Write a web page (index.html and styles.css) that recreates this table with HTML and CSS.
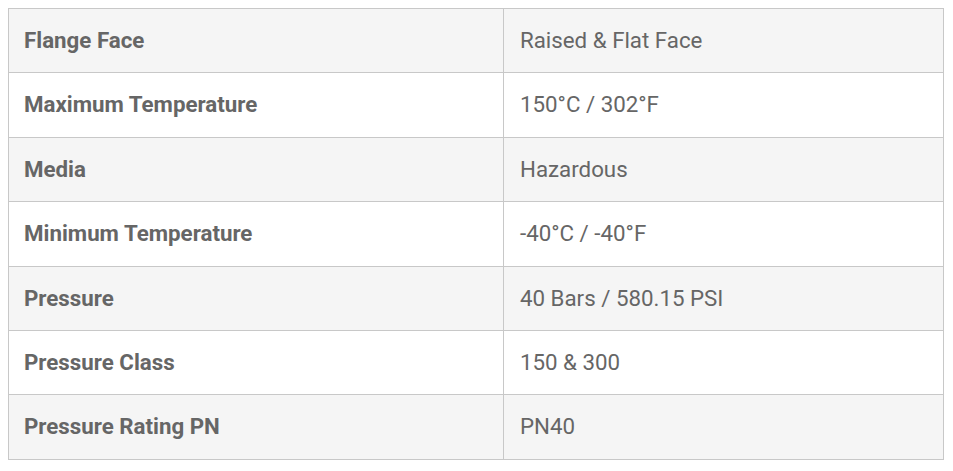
FILE: index.html
```html
<!DOCTYPE html>
<html>
<head>
<meta charset="utf-8">
<link rel="stylesheet" href="styles.css">
</head>
<body>
<table class="specs">
  <tbody>
    <tr><th>Flange Face</th><td>Raised &amp; Flat Face</td></tr>
    <tr><th>Maximum Temperature</th><td>150°C / 302°F</td></tr>
    <tr><th>Media</th><td>Hazardous</td></tr>
    <tr><th>Minimum Temperature</th><td>-40°C / -40°F</td></tr>
    <tr><th>Pressure</th><td>40 Bars / 580.15 PSI</td></tr>
    <tr><th>Pressure Class</th><td>150 &amp; 300</td></tr>
    <tr><th>Pressure Rating PN</th><td>PN40</td></tr>
  </tbody>
</table>
</body>
</html>
```
FILE: styles.css
```css
html, body {
  margin: 0;
  padding: 0;
  background: #fff;
}
body {
  padding: 8px 9px 0 8px;
  font-family: Roboto, "Liberation Sans", sans-serif;
}
.specs {
  width: 936px;
  border-collapse: collapse;
  border: 1px solid #c8c8c8;
  color: #666;
  font-size: 22.3px;
}
.specs tr:nth-child(odd) {
  background: #f5f5f5;
}
.specs th,
.specs td {
  border: 1px solid #c8c8c8;
  padding: 16px 15px 16px 15px;
  line-height: 31.4px;
  text-align: left;
  vertical-align: middle;
}
.specs th {
  font-weight: 700;
  width: 464px;
}
.specs td {
  font-weight: 400;
  padding-left: 16px;
}
```
